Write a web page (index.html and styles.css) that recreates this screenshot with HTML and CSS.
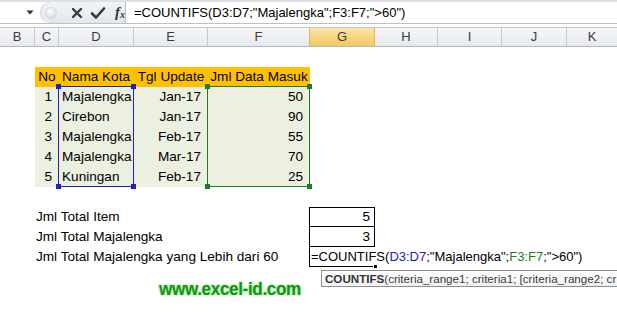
FILE: index.html
```html
<!DOCTYPE html>
<html>
<head>
<meta charset="utf-8">
<link rel="stylesheet" href="styles.css">
</head>
<body>
<div class="app">
  <div class="fbar">
    <div class="namebox">
      <svg class="drop" width="8" height="5" viewBox="0 0 8 5"><path d="M0.5 0.5h7L4 4.5z" fill="#333"/></svg>
    </div>
    <div class="btns">
      <span class="grip"></span>
      <svg class="ico" width="14" height="14" viewBox="0 0 14 14"><path d="M3 3L11 11M11 3L3 11" stroke="#3a3a3a" stroke-width="2.4" stroke-linecap="round"/></svg>
      <svg class="ico" width="16" height="14" viewBox="0 0 16 14"><path d="M2 7.5L6 11.5L14 2.5" fill="none" stroke="#3a3a3a" stroke-width="2.6" stroke-linecap="round" stroke-linejoin="round"/></svg>
      <span class="fx"><i>f</i><sub>x</sub></span>
    </div>
    <div class="formula">=COUNTIFS(D3:D7;"Majalengka";F3:F7;"&gt;60")</div>
  </div>
  <div class="gap"></div>
  <div class="colhdr">
    <div class="ch">B</div>
    <div class="ch">C</div>
    <div class="ch">D</div>
    <div class="ch">E</div>
    <div class="ch">F</div>
    <div class="ch sel">G</div>
    <div class="ch">H</div>
    <div class="ch">I</div>
    <div class="ch">J</div>
    <div class="ch last">K</div>
  </div>
  <div class="sheet">
    <div class="c hd ctr" style="grid-area:2/2">No</div>
    <div class="c hd" style="grid-area:2/3">Nama Kota</div>
    <div class="c hd ctr" style="grid-area:2/4">Tgl Update</div>
    <div class="c hd ctr" style="grid-area:2/5">Jml Data Masuk</div>

    <div class="c bd r" style="grid-area:3/2">1</div>
    <div class="c bd" style="grid-area:3/3">Majalengka</div>
    <div class="c bd r" style="grid-area:3/4">Jan-17</div>
    <div class="c bd r" style="grid-area:3/5">50</div>

    <div class="c bd r" style="grid-area:4/2">2</div>
    <div class="c bd" style="grid-area:4/3">Cirebon</div>
    <div class="c bd r" style="grid-area:4/4">Jan-17</div>
    <div class="c bd r" style="grid-area:4/5">90</div>

    <div class="c bd r" style="grid-area:5/2">3</div>
    <div class="c bd" style="grid-area:5/3">Majalengka</div>
    <div class="c bd r" style="grid-area:5/4">Feb-17</div>
    <div class="c bd r" style="grid-area:5/5">55</div>

    <div class="c bd r" style="grid-area:6/2">4</div>
    <div class="c bd" style="grid-area:6/3">Majalengka</div>
    <div class="c bd r" style="grid-area:6/4">Mar-17</div>
    <div class="c bd r" style="grid-area:6/5">70</div>

    <div class="c bd r" style="grid-area:7/2">5</div>
    <div class="c bd" style="grid-area:7/3">Kuningan</div>
    <div class="c bd r" style="grid-area:7/4">Feb-17</div>
    <div class="c bd r" style="grid-area:7/5">25</div>

    <div class="range blue" style="grid-area:3/3/8/4"><i class="k tl"></i><i class="k tr"></i><i class="k bl"></i><i class="k br"></i></div>
    <div class="range green" style="grid-area:3/5/8/6"><i class="k tl"></i><i class="k tr"></i><i class="k bl"></i><i class="k br"></i></div>

    <div class="c lbl" style="grid-area:9/2/9/6">Jml Total Item</div>
    <div class="c lbl" style="grid-area:10/2/10/6">Jml Total Majalengka</div>
    <div class="c lbl" style="grid-area:11/2/11/6">Jml Total Majalengka yang Lebih dari 60</div>

    <div class="c box r" style="grid-area:9/6">5</div>
    <div class="c box r b2" style="grid-area:10/6">3</div>
    <div class="c edit" style="grid-area:11/6"><span class="ftext">=COUNTIFS(<span class="rb">D3:D7</span>;"Majalengka";<span class="rg">F3:F7</span>;"&gt;60")</span><i class="fill"></i></div>

    <div class="tip" style="grid-area:12/6"><b>COUNTIFS</b>(criteria_range1; criteria1; [criteria_range2; cr</div>

    <div class="brand" style="grid-area:13/4/13/6"><span class="brandtxt">www.excel-id.com</span></div>
  </div>
</div>
</body>
</html>
```
FILE: styles.css
```css
html, body {
  margin: 0;
  padding: 0;
  background: #ffffff;
}
.app {
  width: 617px;
  height: 324px;
  overflow: hidden;
  font-family: "Liberation Sans", Arial, sans-serif;
}
.fbar {
  display: flex;
  border-top: 2px solid #dde1e6;
  border-bottom: 1px solid #b9c0c8;
  background: #ffffff;
  box-sizing: border-box;
  height: 24px;
}
.namebox {
  width: 40px;
  display: flex;
  align-items: center;
  justify-content: flex-end;
  padding-right: 6px;
  box-sizing: border-box;
}
.drop { display: block; }
.btns {
  width: 85px;
  display: flex;
  align-items: center;
  gap: 6px;
  background: linear-gradient(#f1f3f6, #e4e8ed);
  border-left: 1px solid #c7ccd3;
  border-radius: 11px 0 0 11px;
  box-sizing: border-box;
  padding-left: 4px;
}
.grip {
  width: 10px;
  height: 10px;
  border-radius: 50%;
  background: radial-gradient(circle at 40% 35%, #ffffff, #c9ced5);
  border: 1px solid #d3d7dc;
  margin-right: 7px;
}
.ico { display: block; }
.fx {
  font-family: "Liberation Serif", serif;
  font-size: 15px;
  color: #333;
  margin-left: 3px;
}
.fx i { font-weight: bold; }
.fx sub { font-size: 10px; font-style: italic; font-weight: bold; vertical-align: -1px; }
.formula {
  flex: 1;
  border-left: 1px solid #b9c0c8;
  padding-left: 8px;
  font-size: 13px;
  line-height: 21px;
  color: #000;
  white-space: nowrap;
}
.gap {
  height: 3px;
  background: #ffffff;
}
.colhdr {
  display: grid;
  grid-template-columns: 35px 24px 75px 74px 102px 65px 63px 64px 65px 50px;
  height: 20px;
  background: linear-gradient(#f6f7f9, #e6e9ed);
  border-top: 1px solid #c5cad1;
  border-bottom: 1px solid #b3bac3;
  box-sizing: border-box;
}
.ch {
  border-right: 1px solid #c5cad1;
  font-size: 13px;
  color: #3b3b3b;
  text-align: center;
  line-height: 18px;
}
.ch.last { border-right: none; }
.ch.sel {
  background: linear-gradient(#fbe3a8, #f5c75f);
  border-left: 1px solid #e8b653;
  border-right: 1px solid #e8b653;
  margin-left: -1px;
}
.sheet {
  display: grid;
  grid-template-columns: 35px 24px 75px 74px 102px 65px 63px 64px 65px 50px;
  grid-template-rows: repeat(14, 20px);
}
.c {
  font-size: 13.6px;
  line-height: 20px;
  color: #000;
  white-space: nowrap;
  padding: 0 3px;
}
.r { text-align: right; padding-right: 7px; }
.ctr { text-align: center; padding: 0; }
.hd { background: #ffc000; }
.bd { background: #ebf0e0; }
.range {
  position: relative;
  margin: -1px 0 0 -1px;
}
.range.blue { border: 1px solid #1f1fc8; }
.range.green { border: 1px solid #1e7d1e; }
.k {
  position: absolute;
  width: 5px;
  height: 5px;
}
.blue .k { background: #1f1fc8; }
.green .k { background: #1e7d1e; }
.k.tl { left: -3px; top: -3px; }
.k.tr { right: -3px; top: -3px; }
.k.bl { left: -3px; bottom: -3px; }
.k.br { right: -3px; bottom: -3px; }
.lbl { padding-left: 1px; }
.box {
  border: 1px solid #000;
  margin-left: -1px;
  padding-right: 4px;
  line-height: 18px;
}
.b2 { border-top: none; line-height: 19px; }
.edit {
  position: relative;
  border-left: 1px solid #000;
  border-bottom: 1px solid #000;
  margin-left: -1px;
  padding-left: 1px;
  overflow: visible;
  line-height: 19px;
  font-size: 13px;
}
.ftext { position: relative; }
.rb { color: #2020c0; }
.rg { color: #1c7f1c; }
.fill {
  position: absolute;
  right: -3px;
  bottom: -3px;
  width: 5px;
  height: 5px;
  background: #000;
  border: 1px solid #fff;
  box-sizing: border-box;
}
.tip {
  position: relative;
  z-index: 2;
  margin-left: 11px;
  margin-top: 3px;
  height: 17px;
  width: 296px;
  box-sizing: border-box;
  background: linear-gradient(#ffffff, #f1f2f4);
  border: 1px solid #8e8e8e;
  border-right: none;
  font-size: 11.6px;
  line-height: 15px;
  padding-left: 3px;
  white-space: nowrap;
  color: #3b3b3b;
}
.tip b { color: #333; }
.brand {
  white-space: nowrap;
  padding-left: 25px;
  margin-top: -8px;
  line-height: 20px;
}
.brandtxt {
  display: inline-block;
  font-family: "Liberation Sans", Arial, sans-serif;
  font-weight: bold;
  font-size: 19px;
  letter-spacing: -0.4px;
  color: #149414;
  text-shadow: 0 0 3px #8fe08f, 0 0 2px #aaf0aa;
  transform: scaleX(0.9);
  transform-origin: left center;
}
```
